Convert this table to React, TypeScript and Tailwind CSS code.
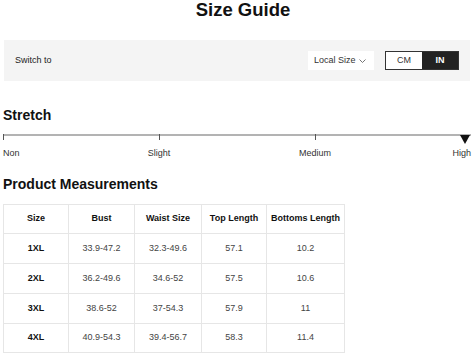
import React from 'react';

const rows = [
  { size: '1XL', bust: '33.9-47.2', waist: '32.3-49.6', top: '57.1', bottoms: '10.2', h: 'h-[30px]' },
  { size: '2XL', bust: '36.2-49.6', waist: '34.6-52', top: '57.5', bottoms: '10.6', h: 'h-[30px]' },
  { size: '3XL', bust: '38.6-52', waist: '37-54.3', top: '57.9', bottoms: '11', h: 'h-[30px]' },
  { size: '4XL', bust: '40.9-54.3', waist: '39.4-56.7', top: '58.3', bottoms: '11.4', h: 'h-[29px]' },
];

const headers = ['Size', 'Bust', 'Waist Size', 'Top Length', 'Bottoms Length'];

const StretchScale: React.FC = () => (
  <div className="w-[468px]">
    <svg width="468" height="12" viewBox="0 0 468 12" className="block">
      <line x1="0" y1="3" x2="468" y2="3" stroke="#b3b3b3" strokeWidth="2" />
      <line x1="0.5" y1="2" x2="0.5" y2="8" stroke="#555" strokeWidth="1" />
      <line x1="156.5" y1="2" x2="156.5" y2="8" stroke="#555" strokeWidth="1" />
      <line x1="312.5" y1="2" x2="312.5" y2="8" stroke="#555" strokeWidth="1" />
      <polygon points="457,3 467,3 462,12" fill="#111" />
    </svg>
    <div className="mt-[4px] grid grid-cols-6 text-[9px] leading-[11px] text-[#333]">
      <span className="col-span-1 text-left">Non</span>
      <span className="col-span-2 text-center">Slight</span>
      <span className="col-span-2 text-center">Medium</span>
      <span className="col-span-1 text-right">High</span>
    </div>
  </div>
);

export default function App() {
  return (
    <div className="w-[474px] h-[355px] overflow-hidden bg-white font-['Liberation_Sans',Arial,sans-serif]">
      <h1 className="pl-[12px] text-center text-[18.5px] leading-[20px] font-bold text-[#111]">Size Guide</h1>

      <div className="mx-[4px] mt-[20px] h-[41px] bg-[#f4f4f4] flex items-center pl-[11px] pr-[11px]">
        <span className="text-[9px] text-[#222]">Switch to</span>
        <div className="ml-auto h-[19px] w-[66px] bg-white flex items-center pl-[6px] gap-[3px] text-[9px] text-[#333]">
          <span>Local Size</span>
          <svg width="7" height="5" viewBox="0 0 7 5" className="mt-[2px]">
            <polyline points="0.5,0.5 3.5,3.5 6.5,0.5" fill="none" stroke="#666" strokeWidth="0.9" />
          </svg>
        </div>
        <div className="ml-[11px] flex h-[19px] w-[74px] border border-[#333] text-[9px]">
          <div className="flex-1 flex items-center justify-center bg-white text-[#333]">CM</div>
          <div className="w-[36px] flex items-center justify-center bg-[#222] text-white font-bold">IN</div>
        </div>
      </div>

      <div className="px-[3px]">
        <h2 className="mt-[26px] text-[14px] leading-[16px] font-bold text-[#111]">Stretch</h2>
        <div className="mt-[9px]">
          <StretchScale />
        </div>

        <h2 className="mt-[17px] text-[14px] leading-[16px] font-bold text-[#111]">Product Measurements</h2>

        <div className="mt-[12px] w-[342px] border-l border-t border-[#e6e6e6] grid grid-cols-[65px_66px_67px_65px_78px] text-[9px]">
          {headers.map((h) => (
            <div key={h} className="h-[29px] flex items-center justify-center border-r border-b border-[#e6e6e6] font-bold text-[#111]">
              {h}
            </div>
          ))}
          {rows.map((r) => (
            <React.Fragment key={r.size}>
              <div className={`${r.h} flex items-center justify-center border-r border-b border-[#e6e6e6] font-bold text-[#111]`}>{r.size}</div>
              <div className={`${r.h} flex items-center justify-center border-r border-b border-[#e6e6e6] text-[#444]`}>{r.bust}</div>
              <div className={`${r.h} flex items-center justify-center border-r border-b border-[#e6e6e6] text-[#444]`}>{r.waist}</div>
              <div className={`${r.h} flex items-center justify-center border-r border-b border-[#e6e6e6] text-[#444]`}>{r.top}</div>
              <div className={`${r.h} flex items-center justify-center border-r border-b border-[#e6e6e6] text-[#444]`}>{r.bottoms}</div>
            </React.Fragment>
          ))}
        </div>
      </div>
    </div>
  );
}
